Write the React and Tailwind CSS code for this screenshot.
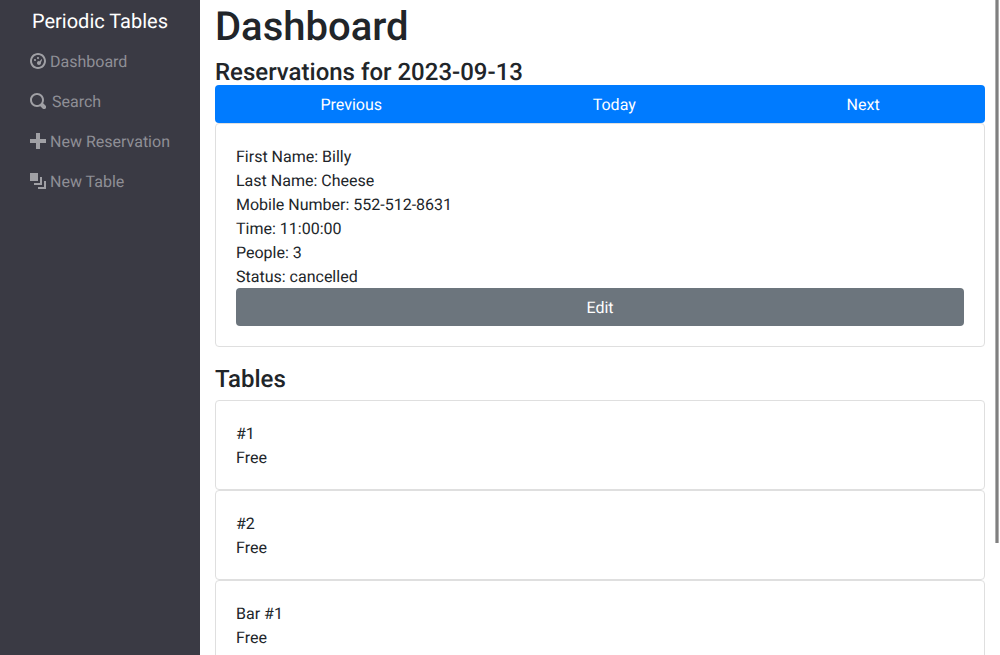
const NAV = [
  { label: 'Dashboard', icon: 'dash' },
  { label: 'Search', icon: 'search' },
  { label: 'New Reservation', icon: 'plus' },
  { label: 'New Table', icon: 'layers' },
]

const ICONS = {
  dash: 'M4 0C1.800 0 0 1.800 0 4s1.800 4 4 4 4-1.800 4-4-1.800-4-4-4zm0 1c1.670 0 3 1.330 3 3S5.670 7 4 7 1 5.670 1 4s1.330-3 3-3zm0 1c-.280 0-.500.220-.500.500S3.720 3 4 3s.500-.220.500-.500S4.280 2 4 2zM2.500 3c-.280 0-.500.220-.500.500s.220.500.500.500.500-.220.500-.500S2.780 3 2.500 3zm3.410 0L4.660 4.190C4.590 4.180 4.540 4 4.470 4 3.920 4 3.500 4.450 3.500 5s.420 1 .970 1 1.030-.450 1.030-1c0-.070-.020-.120-.030-.190L6 3.500V3h-.090z',
  search: 'M3.500 0C1.570 0 0 1.570 0 3.500S1.570 7 3.500 7c.590 0 1.170-.140 1.660-.410a1 1 0 0 0 .130.130l1 1a1.020 1.020 0 1 0 1.440-1.440l-1-1a1 1 0 0 0-.160-.130C6.800 4.660 7 4.100 7 3.500 7 1.570 5.430 0 3.500 0zm0 1C4.890 1 6 2.110 6 3.500c0 .660-.240 1.270-.660 1.720l-.030.030a1 1 0 0 0-.130.130C4.740 5.770 4.150 6 3.500 6 2.110 6 1 4.890 1 3.500S2.110 1 3.500 1z',
  plus: 'M3 0v3H0v2h3v3h2V5h3V3H5V0H3z',
  layers: 'M0 0v4h4V0H0zm5 2v3H2v1h4V2H5zm2 2v3H4v1h4V4H7z',
}

function NavIcon({ name }) {
  return (
    <svg width="16" height="16" viewBox="0 0 8 8" fill="#a0a0a5" className="shrink-0">
      <path fillRule="evenodd" d={ICONS[name]} />
    </svg>
  )
}

function Card({ lines, children }) {
  return (
    <div className="border border-[#dfdfdf] rounded p-5 shrink-0">
      {lines.map((l) => <div key={l} className="h-6 pt-px">{l}</div>)}
      {children}
    </div>
  )
}

export default function App() {
  return (
    <div className="relative flex h-[655px] w-full overflow-hidden bg-white text-[16px] leading-6 text-[#212529] font-['Roboto',sans-serif] [text-rendering:geometricPrecision]">
      {/* Sidebar */}
      <aside className="w-[200px] shrink-0 bg-[#3a3a44]">
        <div className="pt-[8px] text-center text-[20px] leading-[26px] text-white">Periodic Tables</div>
        <nav className="mt-[7px] pl-[30px]">
          {NAV.map((n) => (
            <div key={n.label} className="flex h-10 items-center text-[#8f8f96]">
              <NavIcon name={n.icon} />
              <span className={n.icon === 'search' ? 'ml-[6px] pt-[2px]' : 'ml-1 pt-[2px]'}>{n.label}</span>
            </div>
          ))}
        </nav>
      </aside>

      {/* Main */}
      <main className="flex w-[770px] ml-[15px] shrink-0 flex-col">
        <h1 className="text-[40px] leading-[48px] font-medium mt-[3px] mb-[6px]">Dashboard</h1>
        <h4 className="h-[28px] pt-px text-[24px] leading-[28px] font-medium">Reservations for 2023-09-13</h4>
        <div className="flex h-[38px] shrink-0 items-center justify-around rounded bg-[#007bff] pt-[2px] text-white">
          <span className="px-[13px]">Previous</span>
          <span className="px-[13px]">Today</span>
          <span className="px-[13px]">Next</span>
        </div>
        <Card lines={['First Name: Billy', 'Last Name: Cheese', 'Mobile Number: 552-512-8631', 'Time: 11:00:00', 'People: 3', 'Status: cancelled']}>
          <div className="flex h-[38px] items-center justify-center rounded bg-[#6c757d] pt-[2px] text-white">Edit</div>
        </Card>
        <h4 className="mt-[18px] mb-[7px] text-[24px] leading-[28px] font-medium">Tables</h4>
        <Card lines={['#1', 'Free']} />
        <Card lines={['#2', 'Free']} />
        <Card lines={['Bar #1', 'Free']} />
      </main>

      {/* Overlay scrollbar */}
      <div className="absolute right-[1px] top-0 h-[543px] w-[4px] border-x border-[#b0b0b0] bg-[#808080]" />
    </div>
  )
}
